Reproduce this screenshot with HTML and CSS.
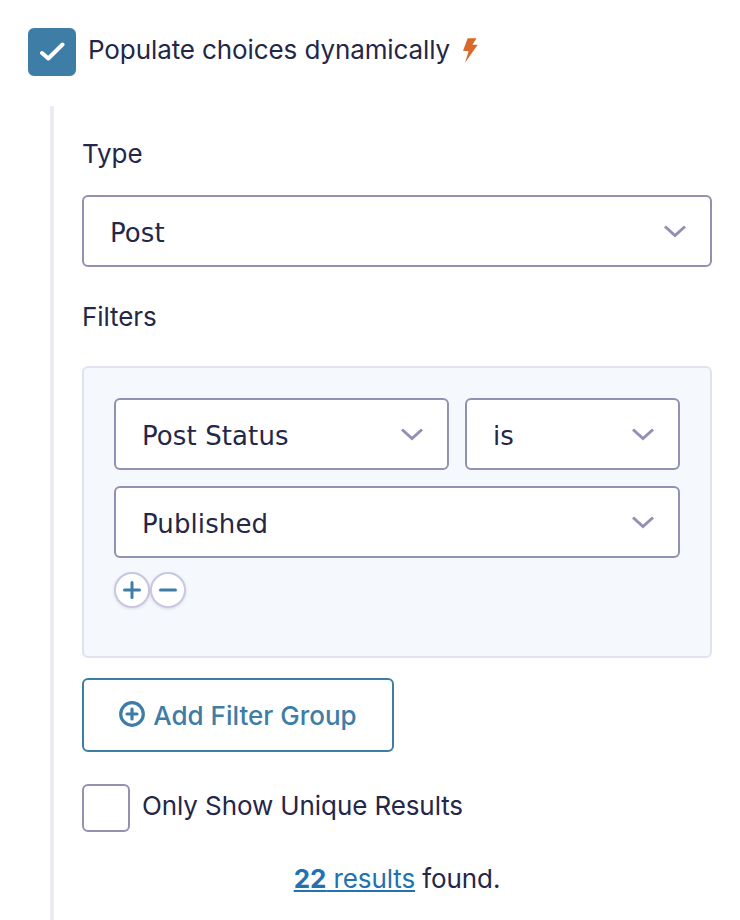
FILE: index.html
```html
<!doctype html>
<html lang="en">
<head>
  <title>Populate choices dynamically</title>
  <meta charset="utf-8">
  <link rel="stylesheet" href="styles.css">
</head>
<body>
  <div class="toggle-row">
    <span class="checkbox checked">
      <svg width="26" height="22" viewBox="0 0 26 22"><path d="M3 12 L9.300 17.500 L23.500 3.500" fill="none" stroke="#fff" stroke-width="4" stroke-linecap="round" stroke-linejoin="round"/></svg>
    </span>
    <span class="toggle-label">Populate choices dynamically</span>
    <svg class="bolt" width="15" height="25" viewBox="0 0 15 25"><path d="M4.700 0.300 L13.500 0.300 L9.500 6.700 L14.700 6.700 L2 24.700 L5.600 13.300 L0 12.700 Z" fill="#d9692b"/></svg>
  </div>

  <section class="panel">
    <label class="label label-type">Type</label>
    <div class="select">
      <span>Post</span>
      <svg class="chev" width="24" height="14" viewBox="0 0 24 14"><path d="M2 2.5 L12 11.5 L22 2.5" fill="none" stroke="#9391b3" stroke-width="3"/></svg>
    </div>

    <label class="label label-filters">Filters</label>
    <div class="filters">
      <div class="filter-row">
        <div class="select grow">
          <span>Post Status</span>
          <svg class="chev" width="24" height="14" viewBox="0 0 24 14"><path d="M2 2.5 L12 11.5 L22 2.5" fill="none" stroke="#9391b3" stroke-width="3"/></svg>
        </div>
        <div class="select op">
          <span>is</span>
          <svg class="chev" width="24" height="14" viewBox="0 0 24 14"><path d="M2 2.5 L12 11.5 L22 2.5" fill="none" stroke="#9391b3" stroke-width="3"/></svg>
        </div>
      </div>
      <div class="select">
        <span>Published</span>
        <svg class="chev" width="24" height="14" viewBox="0 0 24 14"><path d="M2 2.5 L12 11.5 L22 2.5" fill="none" stroke="#9391b3" stroke-width="3"/></svg>
      </div>
      <div class="round-btns">
        <span class="round-btn"><svg width="20" height="20" viewBox="0 0 20 20"><path d="M10 2.500 V17.500 M2.500 10 H17.500" stroke="#3e7da6" stroke-width="3" stroke-linecap="round"/></svg></span>
        <span class="round-btn"><svg width="20" height="20" viewBox="0 0 20 20"><path d="M2.500 10 H17.500" stroke="#3e7da6" stroke-width="3" stroke-linecap="round"/></svg></span>
      </div>
    </div>

    <button class="add-btn" type="button">
      <svg class="add-icon" width="26" height="26" viewBox="0 0 26 26"><circle cx="13" cy="13" r="11.300" fill="none" stroke="#3e7da6" stroke-width="3.200"/><path d="M13 8 V18 M8 13 H18" stroke="#3e7da6" stroke-width="3.200" stroke-linecap="round"/></svg>
      <span>Add Filter Group</span>
    </button>

    <div class="unique-row">
      <span class="checkbox"></span>
      <span class="unique-label">Only Show Unique Results</span>
    </div>

    <p class="results"><a href="#"><b>22</b> results</a> found.</p>
  </section>
</body>
</html>
```

FILE: styles.css
```css
* {
  box-sizing: border-box;
}
html, body {
  height: 100%;
}
body {
  margin: 0;
  padding: 28px 28px 0;
  overflow: hidden;
  background: #fff;
  color: #242748;
  font: 26px/36px Inter, sans-serif;
  letter-spacing: -0.1px;
}
.toggle-row {
  display: flex;
  align-items: flex-start;
  height: 78px;
}
.checkbox {
  flex: none;
  display: flex;
  align-items: center;
  justify-content: center;
  width: 48px;
  height: 48px;
  border: 2px solid #9391b3;
  border-radius: 6px;
  background: #fff;
}
.checkbox.checked {
  background: #3e7da6;
  border-color: #3e7da6;
}
.toggle-label {
  margin-left: 12px;
  margin-top: 4px;
}
.bolt {
  margin: 10px 0 0 13px;
}
.panel {
  margin-left: 22px;
  border-left: 4px solid #ebebf6;
  padding: 30px 0 0 28px;
  width: 662px;
  height: 814px;
}
.label {
  display: block;
}
.label-type {
  margin-bottom: 23px;
}
.label-filters {
  margin: 32px 0 31px;
}
.select {
  display: flex;
  align-items: center;
  justify-content: space-between;
  height: 72px;
  padding: 3px 23px 0 26px;
  border: 2px solid #9391b3;
  border-radius: 6px;
  background: #fff;
  font-family: "DejaVu Sans", sans-serif;
  font-size: 26px;
  letter-spacing: 0.1px;
}
.chev {
  flex: none;
  margin-top: -3px;
}
.filters {
  height: 292px;
  padding: 30px;
  border: 2px solid #e1e2f0;
  border-radius: 6px;
  background: #f5f8fc;
}
.filter-row {
  display: flex;
  gap: 16px;
  margin-bottom: 16px;
}
.grow {
  flex: 1;
}
.op {
  width: 215px;
}
.round-btns {
  display: flex;
  margin-top: 14px;
}
.round-btn {
  display: flex;
  align-items: center;
  justify-content: center;
  width: 36px;
  height: 36px;
  border: 2px solid #c9c8e0;
  border-radius: 50%;
  background: #fff;
  box-shadow: 0 1px 3px rgba(60, 60, 110, 0.15);
}
.add-btn {
  display: flex;
  align-items: center;
  justify-content: center;
  gap: 8px;
  width: 312px;
  height: 74px;
  margin-top: 20px;
  padding: 0;
  border: 2px solid #3e7da6;
  border-radius: 6px;
  background: #fff;
  color: #3e7da6;
  font: 500 26px/36px Inter, sans-serif;
}
.add-icon {
  margin-top: -2px;
}
.add-btn span {
  padding-top: 2px;
}
.unique-row {
  display: flex;
  align-items: center;
  margin-top: 32px;
}
.unique-label {
  margin-left: 12px;
  margin-top: -4px;
}
.results {
  margin: 29px 0 0;
  text-align: center;
}
.results a {
  color: #2271b1;
}
.results b {
  font-weight: 700;
}
```
